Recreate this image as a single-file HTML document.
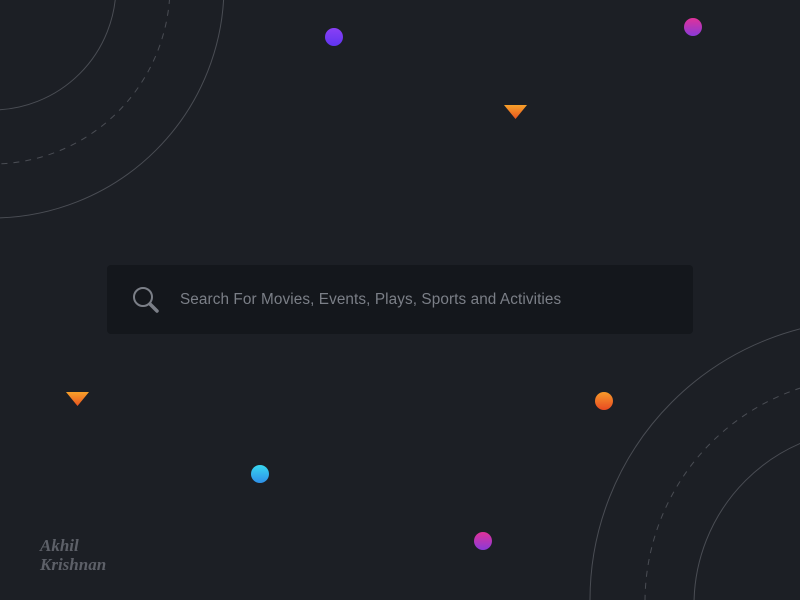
<!DOCTYPE html>
<html><head><style>
html,body{margin:0;padding:0;width:800px;height:600px;overflow:hidden;background:#1c1f25;font-family:"Liberation Sans",sans-serif}
.box{position:absolute;left:107px;top:265px;width:586px;height:69px;background:#14171c;border-radius:4px}
.txt{position:absolute;left:180px;top:291px;font-size:15.3px;color:#7b7f87;letter-spacing:0.1px;white-space:nowrap}
.dot{position:absolute;border-radius:50%;width:18px;height:18px}
.sig{position:absolute;left:40px;top:536px;font-family:"Liberation Serif",serif;font-style:italic;color:#5d6068;font-size:17px;line-height:19px;font-weight:bold}
</style></head><body>
<svg width="800" height="600" style="position:absolute;left:0;top:0">
<g fill="none" stroke="#4a4d54" stroke-width="1">
<circle cx="-8" cy="-14" r="124"/>
<circle cx="-8" cy="-14" r="178" stroke-dasharray="6 6"/>
<circle cx="-8" cy="-14" r="232"/>
<circle cx="870" cy="605" r="176"/>
<circle cx="870" cy="602" r="225" stroke-dasharray="6 6"/>
<circle cx="870" cy="600" r="280"/>
</g>
<defs>
<linearGradient id="o" x1="0" y1="0" x2="0" y2="1"><stop offset="0" stop-color="#f7a12a"/><stop offset="1" stop-color="#e8531f"/></linearGradient>
</defs>
<polygon points="504,105 527,105 515.5,119" fill="url(#o)"/>
<polygon points="66,392 89,392 77.5,406" fill="url(#o)"/>
</svg>
<div class="dot" style="left:325px;top:28px;background:linear-gradient(#8a3ff5,#5f35f0)"></div>
<div class="dot" style="left:684px;top:18px;background:linear-gradient(#e0329a,#8a3ad8)"></div>
<div class="dot" style="left:595px;top:392px;background:linear-gradient(#f79a2a,#e84a22)"></div>
<div class="dot" style="left:251px;top:465px;background:linear-gradient(#38d7f0,#2e8fe8)"></div>
<div class="dot" style="left:474px;top:532px;background:linear-gradient(#e0329a,#8a3ad8)"></div>
<div class="box"></div>
<svg width="40" height="40" style="position:absolute;left:128px;top:282px">
<circle cx="15" cy="15" r="9" fill="none" stroke="#7b7f87" stroke-width="2"/>
<line x1="22" y1="22" x2="29" y2="29" stroke="#7b7f87" stroke-width="3.5" stroke-linecap="round"/>
</svg>
<div class="txt">Search For Movies, Events, Plays, Sports and Activities</div>
<div class="sig">Akhil<br>Krishnan</div>
</body></html>
